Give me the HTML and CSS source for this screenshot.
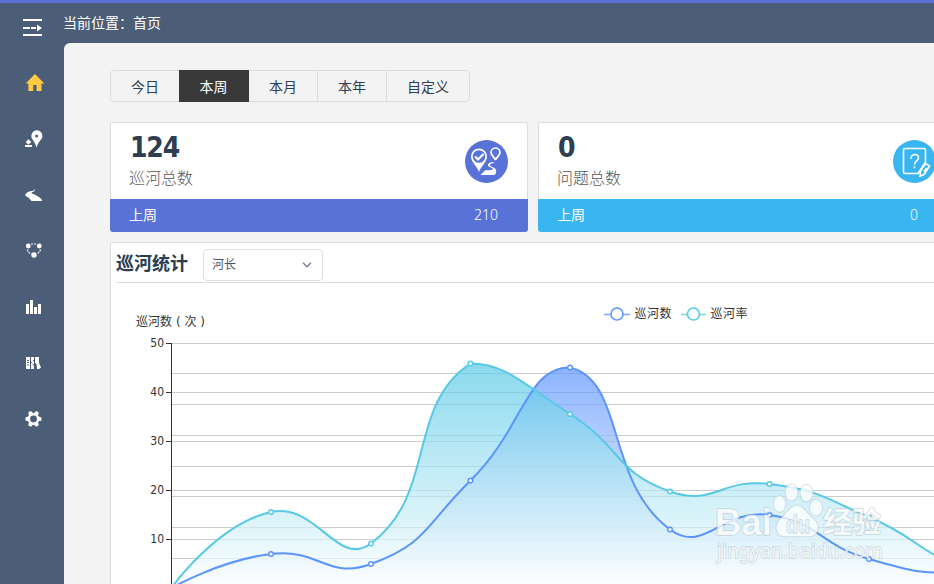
FILE: index.html
```html
<!DOCTYPE html>
<html lang="zh-CN">
<head>
<meta charset="utf-8">
<title>首页</title>
<link rel="stylesheet" href="styles.css">
</head>
<body>
<div class="app">
  <aside class="sidebar">
    <svg class="toggle" viewBox="0 0 20 18"><path d="M0 1h19M0 16h19M0 9h7M8 9h5M14 9h3" stroke="#fff" stroke-width="2"/><path d="M14 5.500l5 3.500-5 3.500z" fill="#fff"/></svg>
    <nav class="menu">
      <svg viewBox="0 0 20 20"><path d="M10 1L.6 10.500h2.800V18h4.800v-6h3.400v6h4.900v-7.500h2.900z" fill="#ffcb43"/></svg>
      <svg viewBox="0 0 20 20"><path d="M11.800 1.200a5.600 5.600 0 0 0-5.400 6c0 3.200 3.400 4.700 5.200 11.200 1.800-6.500 5.800-8 5.800-11.200a5.600 5.600 0 0 0-5.600-6zM3.300 10.200L.8 13l2.500 2.800 3-2.800zM0 16h7v2H0z"/><circle cx="11.600" cy="7" r="1.500" class="hole"/></svg>
      <svg viewBox="0 0 20 20"><path d="M10 3L9.500 5 8 5.800 5 6.200C1 7.500-1.500 10 1.500 11.500 4 12.500 5 14.500 6.500 16H17v-1c-2-3-5-4-7.500-5.500-2-1.200-4-1.200-2.500-2.200L9 6.500 10 5z"/></svg>
      <svg viewBox="0 0 20 20"><circle cx="3.300" cy="5" r="2.400"/><circle cx="14.300" cy="5" r="2.400"/><circle cx="9" cy="14" r="2.700"/><path d="M6 3h6M2.300 8.500C3 11 4 12 6.500 13M15.500 8.500c-.7 2.500-2 3.500-4 4.500" class="dots"/></svg>
      <svg viewBox="0 0 20 20"><path d="M1 6h3v10H1zM5 2h3v14H5zM9 9h3v7H9zM13 6h3v10h-3z"/></svg>
      <svg viewBox="0 0 20 20"><path d="M1 3h4v12H1zM6 3h3v12H6zM10 3h4v6l2 4.500-2 1.500h-2l-.500-5-1.500-1z"/><path d="M2 6.500h2M2 8.500h2M2 11h2M6 8l1.500 1.500M8.500 6v1.500M8.500 10v1.300" class="cut"/></svg>
      <svg viewBox="0 0 20 20"><g class="gear"><circle cx="8.500" cy="8.900" r="5.500"/><path d="M5.500 3.500l6 10.800M11.500 3.500l-6 10.800M2.500 8.900h12"/></g><circle cx="8.500" cy="8.900" r="3.400" class="hole"/></svg>
    </nav>
  </aside>
  <div class="main">
    <header class="crumb">当前位置：首页</header>
    <main class="page">
      <div class="tabs"><span>今日</span><span class="active">本周</span><span>本月</span><span>本年</span><span>自定义</span></div>
      <div class="cards">
        <section class="card blue">
          <div class="body">
            <div><div class="num">124</div><div class="label">巡河总数</div></div>
            <svg class="badge" viewBox="0 0 43 43"><circle cx="21.500" cy="21.500" r="21.500" fill="#5972d8"/><path d="M14 32C12.500 27 6 22 6 16.500a8 8 0 0 1 16 0C22 22 15.500 27 14 32z" fill="#fff"/><circle cx="14" cy="16.500" r="6.300" fill="#5972d8"/><path d="M10 16.500l3 3 5.500-5.500" class="tick"/><path d="M30.500 20c-.5-2.500-4.500-4.500-4.500-7.500a4.500 4.500 0 0 1 9 0c0 3-4 5-4.500 7.500z" class="pin"/><path d="M29.500 22c-5 0-7 1.800-6.500 3.500.6 2 5 2 4.800 3.500-.2 1.500-4 1-7.800 1.400l-4.500 4.700h13c3 0 3.500-4.600 1.500-6.500-2-2-5.500-2.300-5.200-3.700.2-1.200 2.700-1.400 4.700-2.900z" fill="#fff"/></svg>
          </div>
          <footer><span>上周</span><span>210</span></footer>
        </section>
        <section class="card cyan">
          <div class="body">
            <div><div class="num">0</div><div class="label">问题总数</div></div>
            <svg class="badge" viewBox="0 0 43 43"><circle cx="21.500" cy="21.500" r="21.500" fill="#39b5ef"/><g fill="none" stroke="#fff" stroke-width="1.600" stroke-linejoin="round"><path d="M25 33.500H12a1.500 1.500 0 0 1-1.500-1.500V10A1.500 1.500 0 0 1 12 8.500h19a1.500 1.500 0 0 1 1.500 1.500v12L25 33.500z"/><path d="M18 19c0-6 8-5.500 7.500-1 0 3-4 3-4 6.500M21.500 26.300v2"/><path d="M27.500 31l5-7.500 4 2.500-5 8-4.500 2.500zM33.500 28l-2.500 4"/></g></svg>
          </div>
          <footer><span>上周</span><span>0</span></footer>
        </section>
      </div>
      <section class="panel">
        <div class="head"><h2>巡河统计</h2><div class="select"><span>河长</span><svg viewBox="0 0 10 6"><path d="M1 .8l4 4 4-4"/></svg></div></div>
        <svg class="chart" viewBox="111 283 823 301">
          <defs>
            <linearGradient id="gb" gradientUnits="userSpaceOnUse" x1="0" y1="367" x2="0" y2="588"><stop offset="0" stop-color="#5b94fd" stop-opacity=".7"/><stop offset="1" stop-color="#fff" stop-opacity=".7"/></linearGradient>
            <linearGradient id="gt" gradientUnits="userSpaceOnUse" x1="0" y1="363" x2="0" y2="588"><stop offset="0" stop-color="#57c9e6" stop-opacity=".7"/><stop offset="1" stop-color="#fff" stop-opacity=".7"/></linearGradient>
          </defs>
          <text x="136" y="326" textLength="69">巡河数 ( 次 )</text>
          <path class="grid" d="M172 343.500H934M172 373.500H934M172 392.500H934M172 404.500H934M172 435.500H934M172 441.500H934M172 466.500H934M172 490.500H934M172 496.500H934M172 527.500H934M172 539.500H934M172 558.500H934"/>
          <path class="axis" d="M171.500 343V584M166 343.500h6M166 392.500h6M166 441.500h6M166 490.500h6M166 539.500h6"/>
          <g class="ticks"><text x="164" y="347">50</text><text x="164" y="396">40</text><text x="164" y="445">30</text><text x="164" y="494">20</text><text x="164" y="543">10</text></g>
          <g id="series"></g>
          <g class="legend"><path d="M604 314.500h26" stroke="#5b94fd"/><circle cx="617" cy="314" r="6" stroke="#5b94fd"/><path d="M681 314.500h25" stroke="#57c9e6"/><circle cx="693.500" cy="314" r="6" stroke="#57c9e6"/></g>
          <text x="634.500" y="318" textLength="37">巡河数</text><text x="710.500" y="318" textLength="37">巡河率</text>
          <g class="mark">
            <text x="715" y="535" class="brand" textLength="57" lengthAdjust="spacingAndGlyphs">Bai</text>
            <ellipse cx="779.500" cy="504" rx="6" ry="8"/><ellipse cx="791.500" cy="492.500" rx="6.200" ry="8.500"/><ellipse cx="806.500" cy="493" rx="6.200" ry="8.500"/><ellipse cx="816" cy="507.500" rx="6.200" ry="8"/>
            <path d="M797 505.500c7 0 10 9 16 13 9 7 5 18-4 18H785c-9 0-12-11-4-18 6-5 9-13 16-13z"/>
            <text x="786" y="533" class="du" textLength="24" lengthAdjust="spacingAndGlyphs">du</text>
            <text x="823" y="533" class="exp" textLength="58">经验</text>
            <text x="717" y="558" class="url" textLength="166" lengthAdjust="spacingAndGlyphs">jingyan.baidu.com</text>
          </g>
        </svg>
      </section>
    </main>
  </div>
</div>
<script src="chart.js"></script>
</body>
</html>
```
FILE: styles.css
```css
* { box-sizing: border-box; }
body { margin: 0; overflow: hidden; background: #4b5d77; font: 14px/20px "DejaVu Sans", "Noto Sans CJK SC", sans-serif; color: #2c3e50; }
.app { display: flex; width: 934px; height: 584px; overflow: hidden; border-top: 3px solid #5972d8; }
.sidebar { width: 64px; flex: none; padding: 16px 0 0 23px; }
.toggle { display: block; width: 20px; height: 18px; }
.menu { display: flex; flex-direction: column; gap: 36px; margin: 36px 0 0 2px; }
.menu svg { width: 20px; height: 20px; fill: #fff; }
.menu svg:first-child { margin-left: -.5px; }
.menu svg:nth-child(n+5) { margin: 1px 0 -1px; }
.menu .gear { fill: #fff; stroke: #fff; stroke-width: 4.4; stroke-linecap: round; }
.menu .gear circle { stroke-width: 1; }
.menu .hole { fill: #4b5d77; }
.menu .dots { fill: none; stroke: #fff; stroke-width: 1.1; stroke-dasharray: 2 1; }
.menu .cut { fill: none; stroke: #4b5d77; stroke-width: .9; }
.main { flex: 1; min-width: 0; display: flex; flex-direction: column; }
.crumb { height: 40px; padding-top: 9px; color: #fff; margin-left: -1px; font-family: "Noto Sans CJK SC", sans-serif; }
.page { flex: 1; min-height: 0; background: #f3f3f3; border-radius: 6px 0 0 0; padding: 27px 0 0 46px; overflow: hidden; }
.tabs { display: flex; width: 360px; height: 32px; border: 1px solid #dcdcdc; border-radius: 4px; }
.tabs span { width: 69px; text-align: center; line-height: 32px; border-right: 1px solid #dcdcdc; }
.tabs span:first-child { width: 68px; border: 0; }
.tabs span:last-child { flex: 1; border: 0; }
.tabs .active { width: 70px; margin: -1px 0; line-height: 34px; background: #393939; border-color: #393939; color: #fff; }
.cards { display: flex; gap: 10px; margin-top: 20px; }
.card { width: 418px; height: 110px; flex: none; border-radius: 3px; overflow: hidden; }
.card .body { height: 77px; background: #fff; border: 1px solid #dcdcdc; border-bottom: 0; border-radius: 3px 3px 0 0; padding: 10px 19px 0 18px; display: flex; justify-content: space-between; }
.num { font: bold 28px/30px "DejaVu Sans Condensed", "DejaVu Sans", sans-serif; font-stretch: condensed; letter-spacing: -1.2px; padding-left: 1px; }
.label { font-size: 16px; line-height: 20px; margin-top: 4px; color: #555; font-family: "Noto Sans CJK SC", sans-serif; font-weight: 300; }
.badge { width: 43px; height: 43px; margin-top: 7px; }
.badge .tick { fill: none; stroke: #fff; stroke-width: 2.2; }
.badge .pin { fill: none; stroke: #fff; stroke-width: 1.7; }
.card footer { height: 33px; padding: 0 30px 0 19px; display: flex; justify-content: space-between; line-height: 32px; color: #fff; font-family: "Noto Sans", "Noto Sans CJK SC", sans-serif; }
.card footer span:last-child { font-weight: 300; }
.blue footer { background: #5972d8; }
.cyan footer { background: #39b5ef; padding-right: 38px; }
.panel { width: 850px; height: 420px; margin-top: 10px; background: #fff; border: 1px solid #dcdcdc; border-radius: 3px; }
.head { display: flex; height: 40px; margin-left: 5px; border-bottom: 1px solid #dcdcdc; }
h2 { margin: 0 14px 0 0; width: 73px; white-space: nowrap; font-size: 18px; line-height: 41px; }
.select { width: 120px; height: 32px; margin-top: 6px; border: 1px solid #dcdfe6; border-radius: 4px; padding: 0 10px 0 8px; display: flex; align-items: center; justify-content: space-between; font-size: 12px; color: #4b5068; background: #fff; }
.select svg { width: 10px; height: 6px; fill: none; stroke: #7b7f9b; stroke-width: 1.5; }
.chart { display: block; width: 823px; height: 301px; font-size: 12px; fill: #333; }
.ticks { text-anchor: end; font-family: "DejaVu Sans Condensed", "DejaVu Sans", sans-serif; font-stretch: condensed; }
.grid { stroke: #ccc; }
.axis { stroke: #333; }
.line { fill: none; stroke-width: 2; }
.dot { fill: #fff; stroke-width: 1.4; }
.legend { stroke-width: 1.6; fill: #fff; }
.legend path { opacity: .75; }
.mark { fill: #fff; fill-opacity: .75; stroke: #b4c2c9; stroke-opacity: .6; stroke-width: 1.4; paint-order: stroke; stroke-linejoin: round; }
.brand { font: bold 37px "Liberation Sans", sans-serif; }
.du { font: bold 24px "Liberation Sans", sans-serif; fill: #e4f4f8; stroke: #a9c2cc; }
.exp { font: bold 29px "Noto Sans CJK SC", sans-serif; }
.url { font: 20px "Noto Sans", sans-serif; }
```
FILE: chart.js
```js
// Smooth area series: tangents follow neighbouring points and stay in the data bounds.
const xs = [171.5, 271, 371, 470.5, 570, 670, 769.5, 869, 969, 1068];
const series = [
  { color: '#5b94fd', fill: 'gb', ys: [588, 554, 564, 480.5, 367.5, 529.5, 515, 559, 573.3, 560] },
  { color: '#57c9e6', fill: 'gt', ys: [588, 512, 543.5, 363.5, 414, 491.5, 484, 517, 569, 580] }
];
function smooth(ys) {
  const lo = Math.min(...ys), hi = Math.max(...ys);
  const clamp = v => Math.max(lo, Math.min(hi, v));
  const n = xs.length, a = [], b = [];
  for (let i = 0; i < n; i++) {
    if (i === 0 || i === n - 1) { a[i] = b[i] = [xs[i], ys[i]]; continue; }
    const vx = (xs[i + 1] - xs[i - 1]) / 2, vy = (ys[i + 1] - ys[i - 1]) / 2;
    const p = Math.hypot(xs[i] - xs[i - 1], ys[i] - ys[i - 1]);
    const q = Math.hypot(xs[i + 1] - xs[i], ys[i + 1] - ys[i]);
    a[i] = [xs[i] - vx * p / (p + q), clamp(ys[i] - vy * p / (p + q))];
    b[i] = [xs[i] + vx * q / (p + q), clamp(ys[i] + vy * q / (p + q))];
  }
  let d = `M${xs[0]} ${ys[0]}`;
  for (let i = 1; i < n; i++) d += `C${b[i - 1]} ${a[i]} ${xs[i]},${ys[i]}`;
  return d;
}
const areas = series.map(s => `<path d="${smooth(s.ys)}L1068 588H171.5Z" fill="url(#${s.fill})"/>`);
const lines = series.map(s => `<path class="line" d="${smooth(s.ys)}" stroke="${s.color}"/>`);
const dots = series.map(s => xs.slice(1).map((x, i) =>
  `<circle class="dot" cx="${x}" cy="${s.ys[i + 1]}" r="2.3" stroke="${s.color}"/>`).join(''));
document.getElementById('series').innerHTML = [...areas, ...lines, ...dots].join('');
```
